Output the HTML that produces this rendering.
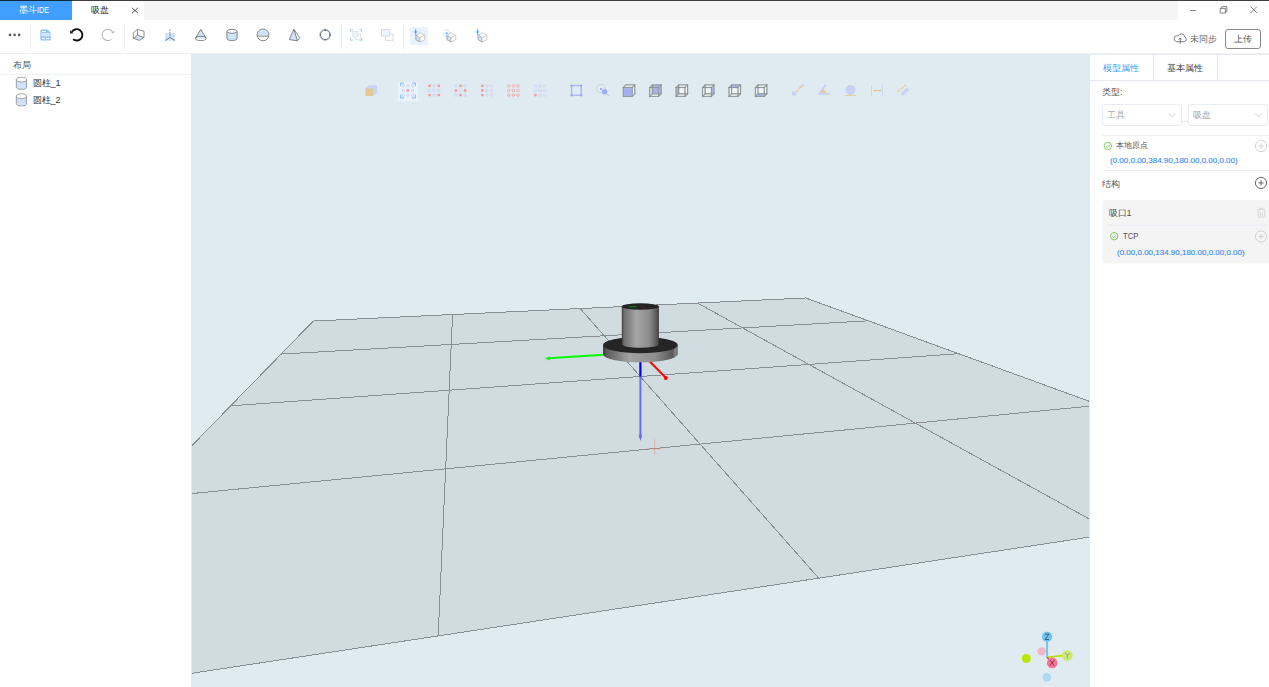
<!DOCTYPE html>
<html><head><meta charset="utf-8">
<style>
*{box-sizing:border-box;margin:0;padding:0}
html,body{width:1269px;height:687px;overflow:hidden;background:#fff;font-family:"Liberation Sans",sans-serif;color:#333}
.a{position:absolute}
.t{position:absolute;white-space:nowrap;line-height:1}
</style></head><body>
<!-- top line -->
<!-- title bar -->
<div class="a" style="left:0;top:0;width:1269px;height:20px;background:#f5f5f5"></div>
<div class="a" style="left:0;top:0;width:72px;height:20px;background:#409eff"></div>
<div class="t" style="left:19px;top:5.5px;font-size:9px;color:#fff">墨斗<span style="display:inline-block;transform:scaleX(0.8);transform-origin:0 0">IDE</span></div>
<div class="a" style="left:72px;top:0;width:72px;height:20px;background:#fff"></div>
<div class="t" style="left:91px;top:5.5px;font-size:9px;color:#333">吸盘</div>
<svg class="a" style="left:131px;top:7px" width="8" height="7" viewBox="0 0 8 7"><path d="M1 .8L7 6.2M7 .8L1 6.2" stroke="#444" stroke-width="0.9"/></svg>
<div class="a" style="left:1178px;top:0;width:91px;height:20px;background:#fff"></div>
<div class="a" style="left:0;top:0;width:1269px;height:1px;background:rgba(0,0,0,.75)"></div>
<svg class="a" style="left:1186px;top:4px" width="80" height="13" viewBox="0 0 80 13">
<path d="M4 6.5H10" stroke="#777" stroke-width="0.9"/>
<path d="M34.2 4.4h5.2v4.7h-5.2z M35.7 4.4V2.6h5.1v4.9h-1.4" stroke="#666" stroke-width="0.8" fill="none"/>
<path d="M64.5 2.5l6.5 6.5M71 2.5l-6.5 6.5" stroke="#777" stroke-width="0.9"/>
</svg>
<!-- toolbar -->
<div class="a" style="left:0;top:53px;width:1269px;height:1px;background:#eef0f4"></div>
<div class="a" style="left:30px;top:24px;width:1px;height:26px;background:#eef0f2"></div>
<div class="a" style="left:124px;top:24px;width:1px;height:26px;background:#eef0f2"></div>
<div class="a" style="left:341px;top:24px;width:1px;height:26px;background:#eef0f2"></div>
<div class="a" style="left:403px;top:24px;width:1px;height:26px;background:#eef0f2"></div>
<svg class="a" style="left:0;top:0" width="500" height="54" viewBox="0 0 500 54">
<g fill="#5a5a5a"><circle cx="10" cy="34.9" r="1.3"/><circle cx="14.6" cy="34.9" r="1.3"/><circle cx="19.2" cy="34.9" r="1.3"/></g>
<!-- save -->
<path d="M41.6 29.4h6l3 3.2v6.7a1.2 1.2 0 0 1-1.2 1.2h-7.8a1.2 1.2 0 0 1-1.2-1.2v-8.7a1.2 1.2 0 0 1 1.2-1.2z" fill="#8ec4fa"/>
<rect x="41.2" y="32.9" width="8.6" height="3.4" fill="#d2e5fb"/>
<rect x="42" y="30.9" width="3.9" height="1.1" fill="#fff"/>
<rect x="42.1" y="37.8" width="2.9" height="1.4" fill="#fff"/>
<rect x="46.1" y="37.8" width="2.9" height="1.4" fill="#fff"/>
<!-- undo -->
<path d="M72 31.6A5.7 5.7 0 1 1 73.1 39.3" fill="none" stroke="#111" stroke-width="1.9"/>
<path d="M70.1 30.2L70.3 33.5L73.6 33.2z" fill="#111"/>
<!-- redo -->
<path d="M112.4 31.6A5.7 5.7 0 1 0 111.4 39.3" fill="none" stroke="#b8b8b8" stroke-width="1.1"/>
<path d="M114.3 30.3L114.1 33.3L111.1 33z" fill="#b8b8b8"/>
<!-- cube -->
<g stroke="#6b6b6b" stroke-width="0.75" fill="none" stroke-linejoin="round">
<path d="M133.3 38.2L137.5 35.3L143.8 37.4L139.5 40.4z" fill="#cfe3fb"/>
<path d="M133.3 38.2V33L137.3 29.3L144 31.3V37.4M137.5 35.3V29.3M133.3 33"/>
</g>
<!-- plane -->
<rect x="164.9" y="32.9" width="10" height="7.9" fill="#cfe3fb"/>
<g stroke="#5a5a5a" stroke-width="0.75" fill="none">
<path d="M170 29.3V37.5" stroke-dasharray="1.5 1"/>
<path d="M170 37.5L165.2 40.5M170 37.5L174.8 40.5"/>
</g>
<!-- cone -->
<path d="M200.8 29.3L195.5 38.4H206.1z" fill="#cfe3fb"/>
<g stroke="#6b6b6b" stroke-width="0.8" fill="none">
<path d="M200.8 29.3L195.4 38.4M200.8 29.3L206.2 38.4"/>
<ellipse cx="200.8" cy="38.4" rx="5.4" ry="2.1"/>
</g>
<!-- cylinder -->
<path d="M226.9 31.3V38.5A5.1 2 0 0 0 237.1 38.5V31.3z" fill="#cfe3fb"/>
<g stroke="#6b6b6b" stroke-width="0.8" fill="none">
<ellipse cx="232" cy="31.3" rx="5.1" ry="2" fill="#fff"/>
<path d="M226.9 31.3V38.5A5.1 2 0 0 0 237.1 38.5V31.3"/>
</g>
<!-- sphere -->
<path d="M257.1 35.6A5.9 5.9 0 0 1 268.9 35.6z" fill="#cfe3fb"/>
<g stroke="#6b6b6b" stroke-width="0.8" fill="none">
<circle cx="263" cy="34.9" r="5.9"/>
<path d="M257.1 36.1H268.9"/>
</g>
<!-- pyramid -->
<path d="M293.8 29.2L289.2 39.6L297.5 40.8z" fill="#cfe3fb"/>
<g stroke="#6b6b6b" stroke-width="0.8" fill="none" stroke-linejoin="round">
<path d="M293.8 29.2L289.2 39.6L297.5 40.8L299.7 37.8z M293.8 29.2L297.5 40.8"/>
</g>
<!-- torus -->
<circle cx="325.2" cy="34.8" r="5.4" fill="none" stroke="#cfe3fb" stroke-width="1.6"/>
<circle cx="325.2" cy="34.8" r="4.8" fill="none" stroke="#6b6b6b" stroke-width="0.9"/>
<g fill="#6b6b6b"><circle cx="325.2" cy="29.9" r="0.9"/><circle cx="325.2" cy="39.6" r="0.9"/><circle cx="320.4" cy="34.8" r="0.9"/><circle cx="330" cy="34.8" r="0.9"/></g>
<!-- group -->
<g stroke="#9ccbfa" stroke-width="1" fill="none">
<path d="M350.6 32V29.8H353M359.4 29.8H361.6V32M361.6 38V40.2H359.4M353 40.2H350.6V38"/>
</g>
<rect x="352.8" y="31.4" width="5" height="5" fill="#edf5fe" stroke="#dcdcdc" stroke-width="0.8"/>
<path d="M355 36.4V39.3H360.6V33.8H357.8" fill="none" stroke="#dcdcdc" stroke-width="0.8"/>
<!-- ungroup -->
<rect x="381.5" y="29.5" width="8.2" height="6.5" fill="#eef5fe" stroke="#d8d8d8" stroke-width="0.9"/>
<path d="M385.3 36V40.4H393V34H389.7" fill="none" stroke="#d8d8d8" stroke-width="0.9"/>
<!-- highlight -->
<rect x="410" y="27" width="18" height="18" fill="#eaf3fd"/>
<g id="cubeico">
<path d="M415.9 35.3L420.3 32.8L424.7 35.3V39.6L420.3 42L415.9 39.6z" fill="#fff" stroke="#bdbdbd" stroke-width="0.8" stroke-linejoin="round"/>
<path d="M415.9 35.3L419.8 37.5V42L415.9 39.6z" fill="#cfe3fb" stroke="#9a9a9a" stroke-width="0.7"/>
<path d="M419.8 37.5L424.7 35.3" stroke="#bdbdbd" stroke-width="0.7"/>
</g>
<g stroke="#409eff" fill="none">
<path d="M415.6 29.5V34.4" stroke-width="0.8"/>
<path d="M412.3 31.9H419" stroke-width="0.8" stroke-dasharray="1 0.7" opacity=".6"/>
</g>
<circle cx="415.6" cy="31.9" r="1" fill="#409eff"/><circle cx="415.6" cy="29.4" r=".7" fill="#6fb4ff"/><circle cx="415.6" cy="34.5" r=".7" fill="#6fb4ff"/>
<use href="#cubeico" x="31.1"/>
<g stroke="#4aa3ff" fill="none" stroke-width="0.8">
<path d="M443.5 33.3A3.5 3.5 0 0 0 447.2 37" stroke-dasharray="1 .6" opacity=".7"/>
<path d="M445.2 30.1A3.5 3.5 0 0 1 449.9 32.9" stroke-dasharray="1 .6" opacity=".7"/>
</g>
<circle cx="446.6" cy="33.3" r="1" fill="#409eff"/>
<use href="#cubeico" x="62.2"/>
<g stroke="#409eff" fill="none">
<path d="M477.6 29.5V34.4" stroke-width="0.8"/>
<path d="M474.3 31.9H481" stroke-width="0.8" stroke-dasharray="1 0.7" opacity=".6"/>
</g>
<circle cx="477.6" cy="31.9" r="1" fill="#409eff"/><circle cx="477.6" cy="29.4" r=".7" fill="#6fb4ff"/><circle cx="477.6" cy="34.5" r=".7" fill="#6fb4ff"/>
</svg>
<!-- right of toolbar -->
<svg class="a" style="left:1172px;top:31px" width="16" height="14" viewBox="0 0 16 14">
<path d="M4.4 10.7H11.9A2.5 2.5 0 0 0 12.9 6A3.8 3.8 0 0 0 5.9 4.8A2.9 2.9 0 0 0 4.4 10.7z" fill="none" stroke="#6a6a6a" stroke-width="0.85"/>
<path d="M8.2 12.9V7M6.6 8.6L8.2 6.9L9.8 8.6" fill="none" stroke="#6a6a6a" stroke-width="0.85"/>
</svg>
<div class="t" style="left:1190px;top:34.5px;font-size:9px;color:#666">未同步</div>
<div class="a" style="left:1225px;top:29px;width:36px;height:20px;border:1px solid #8a8a8a;border-radius:3px"></div>
<div class="t" style="left:1234px;top:34.5px;font-size:9px;color:#555">上传</div>
<!-- left panel -->
<div class="t" style="left:13px;top:60.5px;font-size:9px;color:#555">布局</div>
<div class="a" style="left:0;top:74px;width:191px;height:1px;background:#f0f2f6"></div>
<svg class="a" style="left:0;top:70px" width="191" height="40" viewBox="0 70 191 40">
<g id="cylico">
<path d="M16.3 80V86.9A5.1 2.4 0 0 0 26.5 86.9V80z" fill="#cfe3fb"/>
<g stroke="#8f8f8f" stroke-width="0.8" fill="none">
<ellipse cx="21.4" cy="79.6" rx="5.1" ry="2.3" fill="#fff"/>
<path d="M16.3 79.6V87A5.1 2.4 0 0 0 26.5 87V79.6"/>
<path d="M17.6 84.6l.8.4M25.2 84.6l-.8.4M21.4 82.6v.6" stroke-width="0.6" stroke="#aab"/>
</g>
</g>
<use href="#cylico" y="16.6"/>
</svg>
<div class="t" style="left:32.5px;top:79px;font-size:9px;color:#333">圆柱_1</div>
<div class="t" style="left:32.5px;top:95.5px;font-size:9px;color:#333">圆柱_2</div>
<!-- viewport -->
<div class="a" style="left:191px;top:54px;width:898px;height:633px;background:#dfebf0;overflow:hidden">
<svg class="a" style="left:0;top:0" width="898" height="633" viewBox="0 0 898 633">
<polygon points="122.27,267.06 614.78,243.97 1161.35,443.18 -259.46,658.78" fill="#d1dce0"/>
<path d="M122.27,267.06L614.78,243.97 M122.27,267.06L-259.46,658.78 M90.08,300.09L677.41,266.79 M261.56,260.53L247.17,581.90 M39.64,351.85L767.63,299.68 M389.17,254.55L627.73,524.16 M-50.72,444.58L908.85,351.15 M506.51,249.04L924.06,479.19 M-259.46,658.78L1161.35,443.18 M614.78,243.97L1161.35,443.18" stroke="#888e91" stroke-width="1" fill="none" shape-rendering="crispEdges"/>
</svg>
<svg class="a" style="left:0;top:0" width="898" height="60" viewBox="191 54 898 60">
<rect x="398.1" y="81.7" width="19.8" height="20" fill="#eaf3fd"/>
<path d="M400.6 86V83.1H403.8M415.4 86V83.1H412.2M400.6 94.6V97.9H403.8M415.4 94.6V97.9H412.2" fill="none" stroke="#8ec5fb" stroke-width="1.2"/>
<circle cx="403.3" cy="85.9" r="1.25" fill="none" stroke="#c9d1f4" stroke-width="0.8"/><circle cx="407.9" cy="85.9" r="1.25" fill="none" stroke="#c9d1f4" stroke-width="0.8"/><circle cx="412.5" cy="85.9" r="1.25" fill="none" stroke="#c9d1f4" stroke-width="0.8"/><circle cx="403.3" cy="90.5" r="1.25" fill="none" stroke="#c9d1f4" stroke-width="0.8"/><circle cx="407.9" cy="90.5" r="1.45" fill="#f29c9c"/><circle cx="412.5" cy="90.5" r="1.25" fill="none" stroke="#c9d1f4" stroke-width="0.8"/><circle cx="403.3" cy="95.1" r="1.25" fill="none" stroke="#c9d1f4" stroke-width="0.8"/><circle cx="407.9" cy="95.1" r="1.25" fill="none" stroke="#c9d1f4" stroke-width="0.8"/><circle cx="412.5" cy="95.1" r="1.25" fill="none" stroke="#c9d1f4" stroke-width="0.8"/>
<circle cx="429.6" cy="85.9" r="1.45" fill="#f29c9c"/><circle cx="434.2" cy="85.9" r="1.25" fill="none" stroke="#c9d1f4" stroke-width="0.8"/><circle cx="438.8" cy="85.9" r="1.45" fill="#f29c9c"/><circle cx="429.6" cy="90.5" r="1.25" fill="none" stroke="#c9d1f4" stroke-width="0.8"/><circle cx="434.2" cy="90.5" r="1.25" fill="none" stroke="#c9d1f4" stroke-width="0.8"/><circle cx="438.8" cy="90.5" r="1.25" fill="none" stroke="#c9d1f4" stroke-width="0.8"/><circle cx="429.6" cy="95.1" r="1.45" fill="#f29c9c"/><circle cx="434.2" cy="95.1" r="1.25" fill="none" stroke="#c9d1f4" stroke-width="0.8"/><circle cx="438.8" cy="95.1" r="1.45" fill="#f29c9c"/>
<circle cx="455.9" cy="85.9" r="1.25" fill="none" stroke="#c9d1f4" stroke-width="0.8"/><circle cx="460.5" cy="85.9" r="1.45" fill="#f29c9c"/><circle cx="465.1" cy="85.9" r="1.25" fill="none" stroke="#c9d1f4" stroke-width="0.8"/><circle cx="455.9" cy="90.5" r="1.45" fill="#f29c9c"/><circle cx="460.5" cy="90.5" r="1.25" fill="none" stroke="#c9d1f4" stroke-width="0.8"/><circle cx="465.1" cy="90.5" r="1.45" fill="#f29c9c"/><circle cx="455.9" cy="95.1" r="1.25" fill="none" stroke="#c9d1f4" stroke-width="0.8"/><circle cx="460.5" cy="95.1" r="1.45" fill="#f29c9c"/><circle cx="465.1" cy="95.1" r="1.25" fill="none" stroke="#c9d1f4" stroke-width="0.8"/>
<circle cx="482.3" cy="85.9" r="1.45" fill="#f29c9c"/><circle cx="486.9" cy="85.9" r="1.25" fill="none" stroke="#c9d1f4" stroke-width="0.8"/><circle cx="491.5" cy="85.9" r="1.25" fill="none" stroke="#c9d1f4" stroke-width="0.8"/><circle cx="482.3" cy="90.5" r="1.45" fill="#f29c9c"/><circle cx="486.9" cy="90.5" r="1.25" fill="none" stroke="#c9d1f4" stroke-width="0.8"/><circle cx="491.5" cy="90.5" r="1.25" fill="none" stroke="#c9d1f4" stroke-width="0.8"/><circle cx="482.3" cy="95.1" r="1.45" fill="#f29c9c"/><circle cx="486.9" cy="95.1" r="1.25" fill="none" stroke="#c9d1f4" stroke-width="0.8"/><circle cx="491.5" cy="95.1" r="1.25" fill="none" stroke="#c9d1f4" stroke-width="0.8"/>
<circle cx="508.8" cy="85.9" r="1.25" fill="none" stroke="#f0a8a8" stroke-width="0.9"/><circle cx="513.4" cy="85.9" r="1.25" fill="none" stroke="#f0a8a8" stroke-width="0.9"/><circle cx="518.0" cy="85.9" r="1.25" fill="none" stroke="#f0a8a8" stroke-width="0.9"/><circle cx="508.8" cy="90.5" r="1.25" fill="none" stroke="#f0a8a8" stroke-width="0.9"/><circle cx="513.4" cy="90.5" r="1.25" fill="none" stroke="#f0a8a8" stroke-width="0.9"/><circle cx="518.0" cy="90.5" r="1.25" fill="none" stroke="#f0a8a8" stroke-width="0.9"/><circle cx="508.8" cy="95.1" r="1.25" fill="none" stroke="#f0a8a8" stroke-width="0.9"/><circle cx="513.4" cy="95.1" r="1.25" fill="none" stroke="#f0a8a8" stroke-width="0.9"/><circle cx="518.0" cy="95.1" r="1.25" fill="none" stroke="#f0a8a8" stroke-width="0.9"/>
<circle cx="535.4" cy="85.9" r="1.25" fill="none" stroke="#c9d1f4" stroke-width="0.8"/><circle cx="540.0" cy="85.9" r="1.25" fill="none" stroke="#c9d1f4" stroke-width="0.8"/><circle cx="544.6" cy="85.9" r="1.25" fill="none" stroke="#c9d1f4" stroke-width="0.8"/><circle cx="535.4" cy="90.5" r="1.25" fill="none" stroke="#c9d1f4" stroke-width="0.8"/><circle cx="540.0" cy="90.5" r="1.25" fill="none" stroke="#c9d1f4" stroke-width="0.8"/><circle cx="544.6" cy="90.5" r="1.25" fill="none" stroke="#c9d1f4" stroke-width="0.8"/><circle cx="535.4" cy="95.1" r="1.45" fill="#f29c9c"/><circle cx="540.0" cy="95.1" r="1.25" fill="none" stroke="#c9d1f4" stroke-width="0.8"/><circle cx="544.6" cy="95.1" r="1.25" fill="none" stroke="#c9d1f4" stroke-width="0.8"/>
<polygon points="623.3,87.5 625.9,84.9 634.8,84.9 634.8,93.8 632.2,96.4 623.3,96.4" fill="#f3f6f7"/><polygon points="623.3,87.5 632.2,87.5 632.2,96.4 623.3,96.4" fill="#a3aef5"/><path d="M623.3 87.5L632.2 87.5M632.2 87.5L632.2 96.4M632.2 96.4L623.3 96.4M623.3 96.4L623.3 87.5M625.9 84.9L634.8 84.9M634.8 84.9L634.8 93.8M623.3 87.5L625.9 84.9M632.2 87.5L634.8 84.9M632.2 96.4L634.8 93.8" fill="none" stroke="#bfc7c9" stroke-width="1.4" stroke-linecap="round"/><path d="M623.3 87.5L632.2 87.5M632.2 87.5L632.2 96.4M632.2 96.4L623.3 96.4M623.3 96.4L623.3 87.5M625.9 84.9L634.8 84.9M634.8 84.9L634.8 93.8M623.3 87.5L625.9 84.9M632.2 87.5L634.8 84.9M632.2 96.4L634.8 93.8" fill="none" stroke="#7b8587" stroke-width="0.7" stroke-linecap="round"/>
<polygon points="649.7,87.5 652.3,84.9 661.2,84.9 661.2,93.8 658.6,96.4 649.7,96.4" fill="#f3f6f7"/><polygon points="652.3,84.9 661.2,84.9 661.2,93.8 652.3,93.8" fill="#a3aef5"/><path d="M649.7 87.5L658.6 87.5M658.6 87.5L658.6 96.4M658.6 96.4L649.7 96.4M649.7 96.4L649.7 87.5M652.3 84.9L661.2 84.9M649.7 87.5L652.3 84.9M661.2 84.9L661.2 93.8M658.6 87.5L661.2 84.9M661.2 93.8L652.3 93.8M658.6 96.4L661.2 93.8M652.3 93.8L652.3 84.9M649.7 96.4L652.3 93.8" fill="none" stroke="#bfc7c9" stroke-width="1.4" stroke-linecap="round"/><path d="M649.7 87.5L658.6 87.5M658.6 87.5L658.6 96.4M658.6 96.4L649.7 96.4M649.7 96.4L649.7 87.5M652.3 84.9L661.2 84.9M649.7 87.5L652.3 84.9M661.2 84.9L661.2 93.8M658.6 87.5L661.2 84.9M661.2 93.8L652.3 93.8M658.6 96.4L661.2 93.8M652.3 93.8L652.3 84.9M649.7 96.4L652.3 93.8" fill="none" stroke="#7b8587" stroke-width="0.7" stroke-linecap="round"/>
<polygon points="676.1,87.5 678.7,84.9 687.6,84.9 687.6,93.8 685.0,96.4 676.1,96.4" fill="#f3f6f7"/><polygon points="676.1,87.5 678.7,84.9 678.7,93.8 676.1,96.4" fill="#a3aef5"/><path d="M676.1 87.5L685.0 87.5M685.0 87.5L685.0 96.4M685.0 96.4L676.1 96.4M676.1 96.4L676.1 87.5M678.7 84.9L687.6 84.9M676.1 87.5L678.7 84.9M687.6 84.9L687.6 93.8M685.0 87.5L687.6 84.9M687.6 93.8L678.7 93.8M685.0 96.4L687.6 93.8M678.7 93.8L678.7 84.9M676.1 96.4L678.7 93.8" fill="none" stroke="#bfc7c9" stroke-width="1.4" stroke-linecap="round"/><path d="M676.1 87.5L685.0 87.5M685.0 87.5L685.0 96.4M685.0 96.4L676.1 96.4M676.1 96.4L676.1 87.5M678.7 84.9L687.6 84.9M676.1 87.5L678.7 84.9M687.6 84.9L687.6 93.8M685.0 87.5L687.6 84.9M687.6 93.8L678.7 93.8M685.0 96.4L687.6 93.8M678.7 93.8L678.7 84.9M676.1 96.4L678.7 93.8" fill="none" stroke="#7b8587" stroke-width="0.7" stroke-linecap="round"/>
<polygon points="702.5,87.5 705.1,84.9 714.0,84.9 714.0,93.8 711.4,96.4 702.5,96.4" fill="#f3f6f7"/><polygon points="711.4,87.5 714.0,84.9 714.0,93.8 711.4,96.4" fill="#a3aef5"/><path d="M702.5 87.5L711.4 87.5M711.4 87.5L711.4 96.4M711.4 96.4L702.5 96.4M702.5 96.4L702.5 87.5M705.1 84.9L714.0 84.9M702.5 87.5L705.1 84.9M714.0 84.9L714.0 93.8M711.4 87.5L714.0 84.9M714.0 93.8L705.1 93.8M711.4 96.4L714.0 93.8M705.1 93.8L705.1 84.9M702.5 96.4L705.1 93.8" fill="none" stroke="#bfc7c9" stroke-width="1.4" stroke-linecap="round"/><path d="M702.5 87.5L711.4 87.5M711.4 87.5L711.4 96.4M711.4 96.4L702.5 96.4M702.5 96.4L702.5 87.5M705.1 84.9L714.0 84.9M702.5 87.5L705.1 84.9M714.0 84.9L714.0 93.8M711.4 87.5L714.0 84.9M714.0 93.8L705.1 93.8M711.4 96.4L714.0 93.8M705.1 93.8L705.1 84.9M702.5 96.4L705.1 93.8" fill="none" stroke="#7b8587" stroke-width="0.7" stroke-linecap="round"/>
<polygon points="729.0,87.5 731.6,84.9 740.5,84.9 740.5,93.8 737.9,96.4 729.0,96.4" fill="#f3f6f7"/><polygon points="729.0,87.5 737.9,87.5 740.5,84.9 731.6,84.9" fill="#a3aef5"/><path d="M729.0 87.5L737.9 87.5M737.9 87.5L737.9 96.4M737.9 96.4L729.0 96.4M729.0 96.4L729.0 87.5M731.6 84.9L740.5 84.9M729.0 87.5L731.6 84.9M740.5 84.9L740.5 93.8M737.9 87.5L740.5 84.9M740.5 93.8L731.6 93.8M737.9 96.4L740.5 93.8M731.6 93.8L731.6 84.9M729.0 96.4L731.6 93.8" fill="none" stroke="#bfc7c9" stroke-width="1.4" stroke-linecap="round"/><path d="M729.0 87.5L737.9 87.5M737.9 87.5L737.9 96.4M737.9 96.4L729.0 96.4M729.0 96.4L729.0 87.5M731.6 84.9L740.5 84.9M729.0 87.5L731.6 84.9M740.5 84.9L740.5 93.8M737.9 87.5L740.5 84.9M740.5 93.8L731.6 93.8M737.9 96.4L740.5 93.8M731.6 93.8L731.6 84.9M729.0 96.4L731.6 93.8" fill="none" stroke="#7b8587" stroke-width="0.7" stroke-linecap="round"/>
<polygon points="755.4,87.5 758.0,84.9 766.9,84.9 766.9,93.8 764.3,96.4 755.4,96.4" fill="#f3f6f7"/><polygon points="755.4,96.4 764.3,96.4 766.9,93.8 758.0,93.8" fill="#a3aef5"/><path d="M755.4 87.5L764.3 87.5M764.3 87.5L764.3 96.4M764.3 96.4L755.4 96.4M755.4 96.4L755.4 87.5M758.0 84.9L766.9 84.9M755.4 87.5L758.0 84.9M766.9 84.9L766.9 93.8M764.3 87.5L766.9 84.9M766.9 93.8L758.0 93.8M764.3 96.4L766.9 93.8M758.0 93.8L758.0 84.9M755.4 96.4L758.0 93.8" fill="none" stroke="#bfc7c9" stroke-width="1.4" stroke-linecap="round"/><path d="M755.4 87.5L764.3 87.5M764.3 87.5L764.3 96.4M764.3 96.4L755.4 96.4M755.4 96.4L755.4 87.5M758.0 84.9L766.9 84.9M755.4 87.5L758.0 84.9M766.9 84.9L766.9 93.8M764.3 87.5L766.9 84.9M766.9 93.8L758.0 93.8M764.3 96.4L766.9 93.8M758.0 93.8L758.0 84.9M755.4 96.4L758.0 93.8" fill="none" stroke="#7b8587" stroke-width="0.7" stroke-linecap="round"/>
<polygon points="365.4,88.6 369.3,85.1 377.1,85.1 377.1,92.7 373,96" fill="#c9d3f3"/><rect x="365.4" y="88.6" width="7.6" height="7.4" fill="#e1ca95"/>
<rect x="571.6" y="85.6" width="9.6" height="9.6" fill="none" stroke="#aab6f6" stroke-width="1.4"/><g fill="#9daaf5"><circle cx="571.6" cy="85.6" r="1.2"/><circle cx="581.2" cy="85.6" r="1.2"/><circle cx="571.6" cy="95.2" r="1.2"/><circle cx="581.2" cy="95.2" r="1.2"/></g>
<circle cx="600.8" cy="88.5" r="4.3" fill="none" stroke="#c3cacb" stroke-width="0.7"/><rect x="600.1" y="88" width="2" height="2" fill="#9eaef5"/><circle cx="604.6" cy="91.7" r="2.7" fill="#9eaef5"/><path d="M606.3 93.4L608.8 95.7" stroke="#a9b8f5" stroke-width="0.9"/>
<circle cx="794.1" cy="93.6" r="2.3" fill="#c8d1f5"/><circle cx="802.6" cy="85.7" r="1.4" fill="#c8d1f5"/><path d="M796.6 91.2L800.6 87.3" stroke="#e6c381" stroke-width="0.9"/><circle cx="796.9" cy="91" r="0.9" fill="#e6c381"/><circle cx="800.3" cy="87.3" r="0.9" fill="#e6c381"/>
<path d="M819.2 93.9L825.4 85.4" stroke="#c8d1f5" stroke-width="1.8" stroke-linecap="round"/><path d="M819 94H830" stroke="#c8d1f5" stroke-width="1.7"/><path d="M821.1 93A6 6 0 0 1 823.8 89.1L826.6 93z" fill="#e5c98f"/>
<circle cx="850.5" cy="89.9" r="5" fill="#c8d1f5"/><path d="M845.3 95.4H856" stroke="#e6ca95" stroke-width="1"/>
<path d="M871.5 85.2V95.8M882.4 85.2V95.8" stroke="#c8d1f5" stroke-width="0.9"/><path d="M874.3 90.5H880" stroke="#e6c381" stroke-width="0.9"/><path d="M873.3 90.5L875.2 89.1V91.9zM881.2 90.5L879.3 89.1V91.9z" fill="#e6c381"/>
<path d="M898.3 91.3L905 85.6" stroke="#e8c98a" stroke-width="0.9"/><circle cx="898.2" cy="91.4" r="0.8" fill="#e8c98a"/><circle cx="905.2" cy="85.4" r="0.8" fill="#e8c98a"/><path d="M901.8 94.6L908.2 88.6" stroke="#c8d1f5" stroke-width="3.2"/>
</svg>
<svg class="a" style="left:0;top:0" width="898" height="633" viewBox="191 54 898 633">
<defs>
<linearGradient id="gs1" x1="0" x2="1" y1="0" y2="0">
<stop offset="0" stop-color="#3c3c3c"/><stop offset="0.06" stop-color="#6e6e6e"/><stop offset="0.4" stop-color="#a6a6a6"/><stop offset="0.75" stop-color="#8a8a8a"/><stop offset="0.95" stop-color="#555"/><stop offset="1" stop-color="#3a3a3a"/>
</linearGradient>
<linearGradient id="gs2" x1="0" x2="1" y1="0" y2="0">
<stop offset="0" stop-color="#333"/><stop offset="0.05" stop-color="#5c5c5c"/><stop offset="0.35" stop-color="#a2a2a2"/><stop offset="0.7" stop-color="#8e8e8e"/><stop offset="0.93" stop-color="#5a5a5a"/><stop offset="0.98" stop-color="#8a8a8a"/><stop offset="1" stop-color="#444"/>
</linearGradient>
</defs>
<!-- blue axis (behind plane part lighter) -->
<path d="M640.4 376V438" stroke="#6b6bf0" stroke-width="2"/>
<path d="M638.6 434.5L640.4 441L642.2 434.5z" fill="#6b6bf0"/>
<path d="M640.4 360V376.5" stroke="#0000f5" stroke-width="2.2"/>
<!-- red axis -->
<path d="M649.8 361.5L665.6 377.6" stroke="#ff0000" stroke-width="2"/>
<circle cx="665.8" cy="378" r="2" fill="#ff0000"/>
<!-- green axis -->
<path d="M548 358.2L604 354.8" stroke="#00ff00" stroke-width="2"/>
<path d="M545 358.5L549.5 356.2L549.8 360.6z" fill="#00ff00"/>
<!-- flange side -->
<path d="M603.1 345V354.3A37.1 8 0 0 0 677.6 354.3V345z" fill="url(#gs2)"/>
<ellipse cx="640.4" cy="345" rx="37.3" ry="8.2" fill="#252525"/>
<!-- upper cylinder -->
<path d="M621.8 306.5V344.2A18.2 3.4 0 0 0 658.9 344.2V306.5z" fill="url(#gs1)"/>
<ellipse cx="640.3" cy="306.5" rx="18.7" ry="3.3" fill="#232323"/>
<path d="M629.2 306.8H636.6" stroke="#1d8a1d" stroke-width="1"/>
<path d="M640.5 305.6L645 308.6" stroke="#7a3020" stroke-width="0.6"/>
<!-- small red cross -->
<g stroke="#f08080" stroke-width="0.6" opacity="0.8"><path d="M654.7 439.4V454.7M647 448.8H663"/></g>
</svg>
<svg class="a" style="left:0;top:0" width="898" height="633" viewBox="191 54 898 633">
<circle cx="1046.8" cy="677.3" r="4.2" fill="#acd8f4"/>
<circle cx="1041.7" cy="651.4" r="4.2" fill="#f1b5c6"/>
<circle cx="1026.3" cy="658.5" r="4.5" fill="#bde400"/>
<path d="M1047 642V657.3" stroke="#6ec0f4" stroke-width="1.8"/>
<path d="M1047 657.3L1062 655.6" stroke="#b4e000" stroke-width="1.8"/>
<path d="M1047 657.3L1050.5 661" stroke="#f03850" stroke-width="1.5"/>
<circle cx="1047" cy="636.8" r="5.1" fill="#6ec2f6"/>
<circle cx="1067.3" cy="655.6" r="5.3" fill="#cce86e"/>
<circle cx="1052.2" cy="662.9" r="5.3" fill="#f27593"/>
<g fill="none" stroke-width="0.8">
<path d="M1045 634.2H1049L1045 639.5H1049" stroke="#2b4a63"/>
<path d="M1065.2 652.8L1067.3 655.6L1069.4 652.8M1067.3 655.6V658.5" stroke="#8a9a60"/>
<path d="M1050 660.2L1054.4 665.6M1054.4 660.2L1050 665.6" stroke="#6a2a3a"/>
</g>
</svg>
</div>
<div class="a" style="left:191px;top:54px;width:1px;height:633px;background:#e5e8ed"></div>
<!-- right panel -->
<div class="a" style="left:1089px;top:54px;width:180px;height:27px;border-bottom:1px solid #e6e9ef;border-top:1px solid #e8ebf0"></div>
<div class="a" style="left:1089px;top:54px;width:1px;height:633px;background:#e5e8ed"></div>
<div class="a" style="left:1153px;top:54px;width:1px;height:26px;background:#e6e9ef"></div>
<div class="a" style="left:1217px;top:54px;width:1px;height:26px;background:#e6e9ef"></div>
<div class="t" style="left:1103px;top:63.8px;font-size:9.3px;color:#409eff">模型属性</div>
<div class="t" style="left:1167px;top:63.8px;font-size:9.3px;color:#444">基本属性</div>
<div class="t" style="left:1102px;top:87.5px;font-size:9.3px;color:#555">类型:</div>
<div class="a" style="left:1102px;top:104px;width:80px;height:21.5px;border:1px solid #e9ecf1;border-radius:3px"></div>
<div class="a" style="left:1182px;top:121px;width:6px;height:1px;background:#e4e7ed"></div>
<div class="a" style="left:1188px;top:104px;width:79.5px;height:21.5px;border:1px solid #e9ecf1;border-radius:3px"></div>
<div class="t" style="left:1107px;top:111px;font-size:9.3px;color:#a8abb2">工具</div>
<div class="t" style="left:1193px;top:111px;font-size:9.3px;color:#a8abb2">吸盘</div>
<svg class="a" style="left:1089px;top:100px" width="180" height="170" viewBox="1089 100 180 170">
<path d="M1169.2 113.6l3.2 3.2 3.2-3.2M1255.2 113.6l3.2 3.2 3.2-3.2" fill="none" stroke="#c0c4cc" stroke-width="0.8"/>
<circle cx="1107.8" cy="146" r="3.7" fill="none" stroke="#67c23a" stroke-width="0.8"/>
<path d="M1106 146.1l1.3 1.3 2.4-2.4" fill="none" stroke="#67c23a" stroke-width="0.8"/>
<circle cx="1261" cy="146" r="5.6" fill="none" stroke="#c8c8c8" stroke-width="0.8"/>
<path d="M1261 143.4v5.2M1258.4 146h5.2" stroke="#c8c8c8" stroke-width="0.8"/>
<circle cx="1261" cy="182.9" r="5.6" fill="none" stroke="#555" stroke-width="0.9"/>
<path d="M1261 180.3v5.2M1258.4 182.9h5.2" stroke="#555" stroke-width="0.9"/>
<rect x="1102.5" y="200" width="170" height="63.5" rx="2.5" fill="#f4f4f5"/>
<path d="M1108.9 225.2H1267" stroke="#e4e9f0" stroke-width="0.8"/>
<path d="M1257.2 209.6h8.2M1259.6 209.6v-1.3h3.4v1.3M1258 210.3v6.8h6.6v-6.8M1260.2 211.8v4M1262.4 211.8v4" fill="none" stroke="#d0d0d0" stroke-width="0.8"/>
<circle cx="1114.2" cy="236.2" r="3.7" fill="none" stroke="#67c23a" stroke-width="0.8"/>
<path d="M1112.4 236.3l1.3 1.3 2.4-2.4" fill="none" stroke="#67c23a" stroke-width="0.8"/>
<circle cx="1261" cy="236.4" r="5.6" fill="none" stroke="#c8c8c8" stroke-width="0.8"/>
<path d="M1261 233.8v5.2M1258.4 236.4h5.2" stroke="#c8c8c8" stroke-width="0.8"/>
</svg>
<div class="a" style="left:1102px;top:135px;width:167px;height:1px;background:#eef0f4"></div>
<div class="t" style="left:1116px;top:142px;font-size:8px;color:#555">本地原点</div>
<div class="t" style="left:1110px;top:156.8px;font-size:8px;color:#3b8ff0;-webkit-text-stroke:0.15px #3b8ff0">(0.00,0.00,384.90,180.00,0.00,0.00)</div>
<div class="a" style="left:1102px;top:170px;width:167px;height:1px;background:#eef0f4"></div>
<div class="t" style="left:1102px;top:179.5px;font-size:9.3px;color:#555">结构</div>
<div class="t" style="left:1108.5px;top:208.5px;font-size:9.2px;color:#555">吸口1</div>
<div class="t" style="left:1123px;top:232px;font-size:9px;color:#555;transform:scaleX(0.86);transform-origin:0 0">TCP</div>
<div class="t" style="left:1117px;top:248.8px;font-size:8px;color:#3b8ff0;-webkit-text-stroke:0.15px #3b8ff0">(0.00,0.00,134.90,180.00,0.00,0.00)</div>
</body></html>
